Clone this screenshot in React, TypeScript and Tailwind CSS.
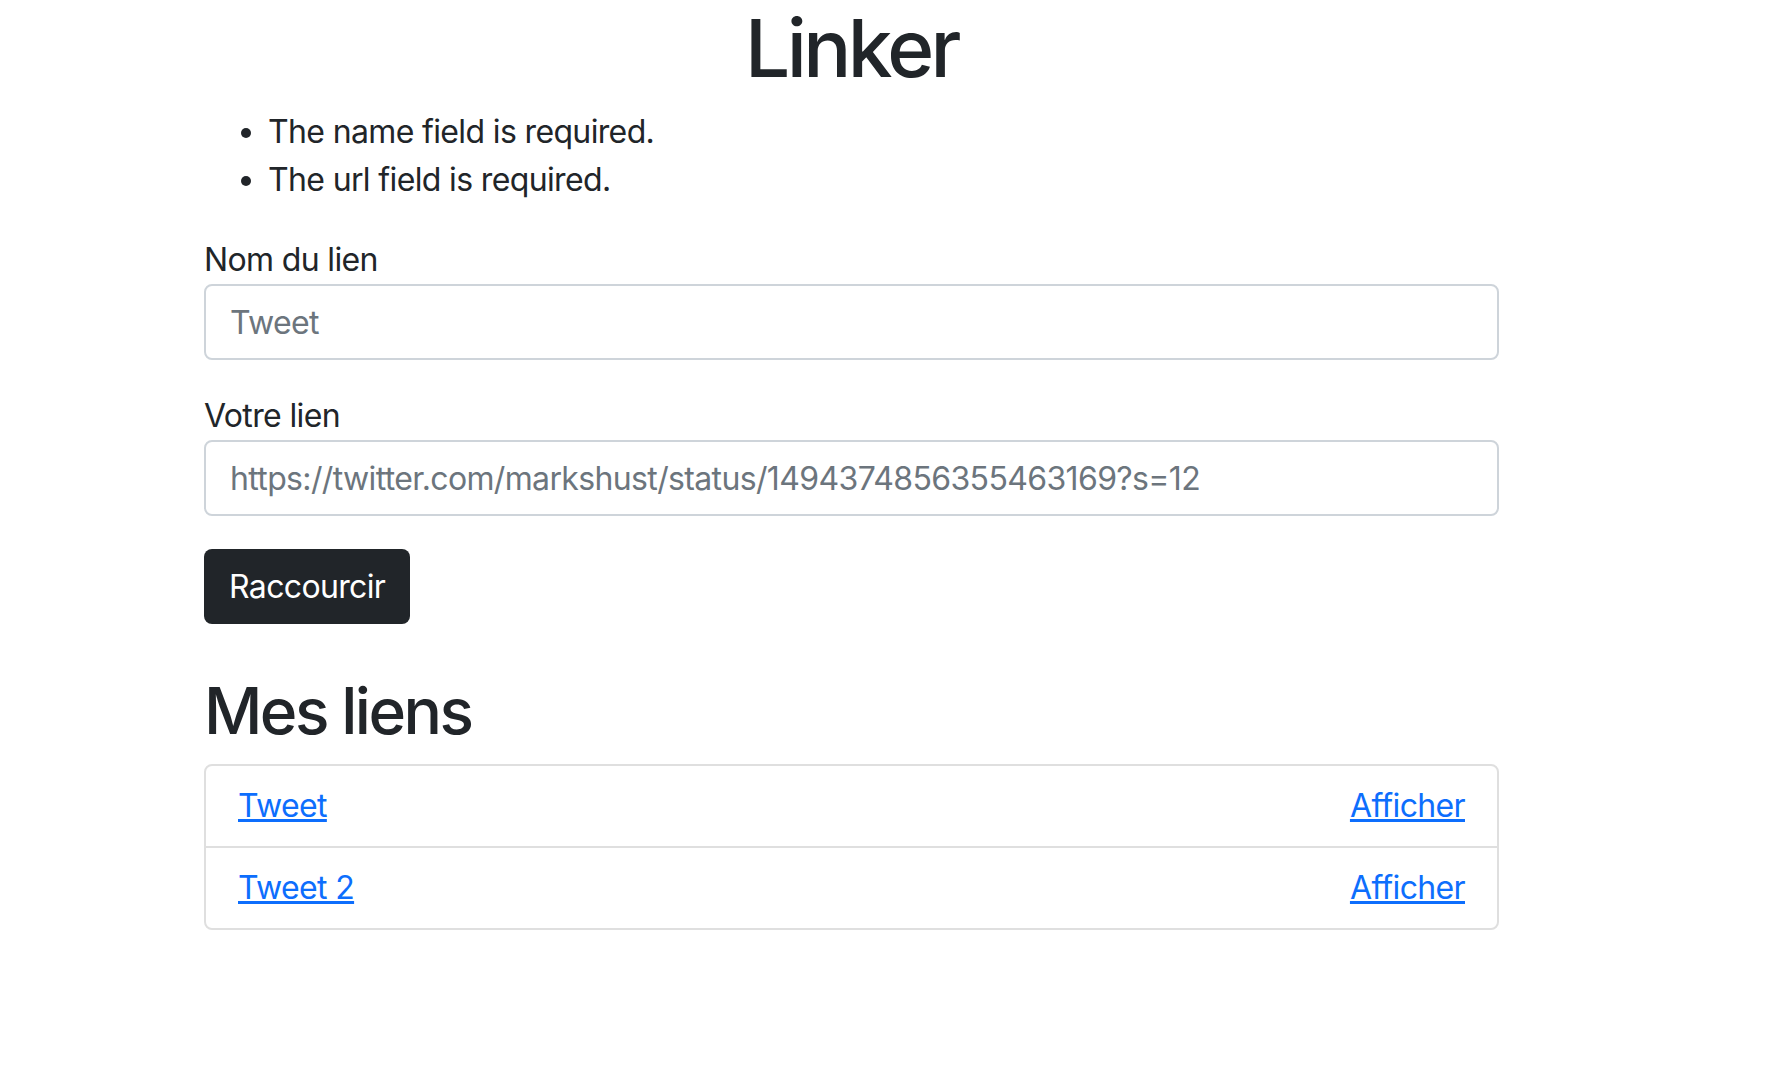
import { useState } from 'react'

type Link = { id: number; name: string; url: string }

const errors = ['The name field is required.', 'The url field is required.']

const links: Link[] = [
  { id: 1, name: 'Tweet', url: '#' },
  { id: 2, name: 'Tweet 2', url: '#' },
]

export default function App() {
  const [name, setName] = useState('')
  const [url, setUrl] = useState('')

  return (
    <div className="min-h-screen bg-white font-['Inter',sans-serif] text-[32px] leading-[48px] tracking-[-0.02em] text-[#212529]">
      <div className="ml-[204px] w-[1295px]">
        <h1 className="mb-[12px] text-center text-[80px] font-medium leading-[96px] tracking-[-0.045em]">Linker</h1>

        <ul className="mb-[32px] list-disc pl-[64px]">
          {errors.map((err) => (
            <li key={err}>{err}</li>
          ))}
        </ul>

        <form onSubmit={(e) => e.preventDefault()}>
          <div className="mb-[32px]">
            <label htmlFor="name" className="block">
              Nom du lien
            </label>
            <input
              id="name"
              value={name}
              onChange={(e) => setName(e.target.value)}
              placeholder="Tweet"
              className="block h-[76px] w-full rounded-[8px] border-2 border-[#ced4da] px-[24px] text-[32px] tracking-[-0.02em] outline-none placeholder:text-[#6c757d]"
            />
          </div>

          <div className="mb-[33px]">
            <label htmlFor="url" className="block">
              Votre lien
            </label>
            <input
              id="url"
              value={url}
              onChange={(e) => setUrl(e.target.value)}
              placeholder="https://twitter.com/markshust/status/1494374856355463169?s=12"
              className="block h-[76px] w-full rounded-[8px] border-2 border-[#ced4da] px-[24px] text-[32px] tracking-[-0.02em] outline-none placeholder:text-[#6c757d]"
            />
          </div>

          <button
            type="submit"
            className="h-[75px] rounded-[8px] bg-[#212529] px-[25px] text-[32px] text-white"
          >
            Raccourcir
          </button>
        </form>

        <h2 className="mt-[48px] mb-[15px] text-[64px] font-medium leading-[77px] tracking-[-0.04em]">Mes liens</h2>

        <div className="rounded-[8px] border-2 border-[#dfdfdf]">
          {links.map((link, i) => (
            <div
              key={link.id}
              className={`flex items-center justify-between px-[32px] py-[16px] ${i > 0 ? 'border-t-2 border-[#dfdfdf]' : ''}`}
            >
              <a href={link.url} className="text-[#0d6efd] underline">
                {link.name}
              </a>
              <a href={link.url} className="text-[#0d6efd] underline">
                Afficher
              </a>
            </div>
          ))}
        </div>
      </div>
    </div>
  )
}
